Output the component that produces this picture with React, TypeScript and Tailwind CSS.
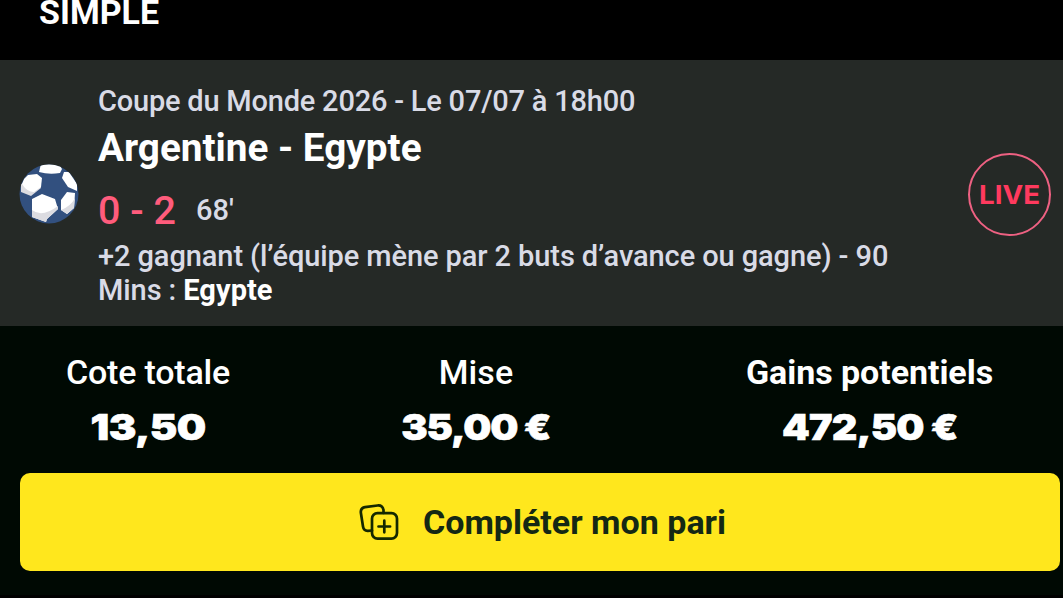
import React from 'react';

interface StatProps {
  label: string;
  value: string;
  labelClass: string;
  valueClass: string;
}

const stats: StatProps[] = [
  {
    label: 'Cote totale',
    value: '13,50',
    labelClass: 'font-medium tracking-[-0.18px]',
    valueClass: 'scale-x-[1.15] tracking-[-0.5px]',
  },
  {
    label: 'Mise',
    value: '35,00 €',
    labelClass: 'font-medium tracking-[0.1px]',
    valueClass: 'scale-x-[1.1] tracking-[-1.1px]',
  },
  {
    label: 'Gains potentiels',
    value: '472,50 €',
    labelClass: 'font-bold tracking-[-0.05px]',
    valueClass: 'scale-x-[1.1] tracking-[-0.7px]',
  },
];

function Stat({ label, value, labelClass, valueClass }: StatProps) {
  return (
    <div className="flex flex-col items-center whitespace-nowrap text-white">
      <span className={`text-[34px] leading-[56px] ${labelClass}`}>{label}</span>
      <span
        className={`font-[Inter] text-[36px] font-black leading-[54px] [-webkit-text-stroke:0.6px_white] ${valueClass}`}
      >
        {value}
      </span>
    </div>
  );
}

function BallIcon() {
  return (
    <svg className="mt-[2px] h-[60px] w-[60px] shrink-0" viewBox="0 0 60 60">
      <defs>
        <clipPath id="ball">
          <circle cx="30" cy="30" r="29.5" />
        </clipPath>
      </defs>
      <g clipPath="url(#ball)">
        <rect width="60" height="60" fill="#32507f" />
        <path d="M22 0L40 0L43 5L41 9Q30 11 20 8Z" fill="#fff" />
        <path d="M2 20Q14 17 17 11L22 24L12 32L2 28Z" fill="#dcdce1" />
        <path d="M5 15L9 11L18 10L23 14L22 23L15 28Q8 28 3 20Z" fill="#fff" />
        <path d="M45 8L50 8L58 20L58 27L49 23L43 14Z" fill="#fff" />
        <path d="M13 35L23 30L36 35L39 45L28 55L27 58L13 53Z" fill="#fff" />
        <path d="M13 46Q23 54 39 42L39 45L28 55L27 58L13 53Z" fill="#dcdce1" />
        <path d="M42 36L48 28L56 29L55 44L48 50L42 46Z" fill="#fff" />
        <path d="M42 46Q52 42 56 34L55 44L48 50Z" fill="#dcdce1" />
      </g>
    </svg>
  );
}

function AddCardIcon() {
  return (
    <svg
      className="h-[36px] w-[40px] shrink-0"
      viewBox="0 0 40 36"
      fill="none"
      stroke="#142800"
      strokeWidth="2.7"
      strokeLinecap="round"
      strokeLinejoin="round"
    >
      <rect x="13" y="9.2" width="25" height="25.4" rx="5.5" />
      <path d="M25.3 16.7v11.6M19.5 22.5h11.6" />
      <path d="M13 26.5L9 26.8Q4.7 27 4 22.5L1.9 9Q1.2 4 6 3.1L18.5 1.5Q23.5 1 24.5 6V9" />
    </svg>
  );
}

export default function App() {
  return (
    <div className="flex h-[598px] w-[1063px] flex-col overflow-hidden bg-black font-[Roboto,sans-serif]">
      <header className="flex h-[60px] items-start pl-[39px]">
        <h1 className="text-[34px] font-bold leading-[24px] text-white">SIMPLE</h1>
      </header>

      <section className="flex h-[266px] items-center bg-[#252926] pl-[18.5px] pr-[12px]">
        <BallIcon />
        <div className="ml-[19.5px] mt-[5px] flex-1 whitespace-nowrap text-[29px] font-medium leading-[34px] text-[#d9dbe6]">
          <p className="tracking-[-0.21px]">Coupe du Monde 2026 - Le 07/07 à 18h00</p>
          <h2 className="text-[38.7px] font-bold leading-[60px] text-white">Argentine - Egypte</h2>
          <p className="mt-[4px] flex h-[57px] items-center">
            <span className="text-[39.5px] leading-[57px] text-[#ff5c7c]">0 - 2</span>
            <span className="mb-[2px] ml-[20px]">68'</span>
          </p>
          <p className="tracking-[-0.09px]">
            +2 gagnant (l’équipe mène par 2 buts d’avance ou gagne) - 90
            <br />
            Mins : <span className="font-bold tracking-[0.05px] text-white">Egypte</span>
          </p>
        </div>
        <div className="mt-[2px] flex h-[83px] w-[83px] shrink-0 items-center justify-center rounded-full border-2 border-[#ee6182] font-[Inter] text-[26px] font-bold text-[#ff3a5e]">
          <span className="scale-x-[1.07]">LIVE</span>
        </div>
      </section>

      <section className="h-[269px] bg-[#000903] pl-[20px] pt-[18px]">
        <div className="grid grid-cols-[256px_400px_387px]">
          {stats.map((stat) => (
            <Stat key={stat.label} {...stat} />
          ))}
        </div>
        <button className="mt-[19px] flex h-[98px] w-[1040px] items-center justify-center rounded-[10px] bg-[#ffe71d] pl-[5px]">
          <AddCardIcon />
          <span className="ml-[24px] text-[34px] font-bold text-[#142814]">Compléter mon pari</span>
        </button>
      </section>
    </div>
  );
}
